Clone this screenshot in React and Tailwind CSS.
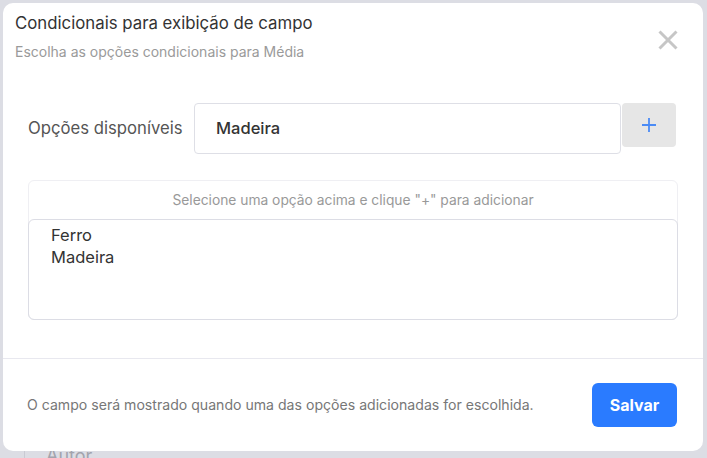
import React from 'react';

export default function App() {
  return (
    <div className="relative w-[707px] h-[458px] overflow-hidden bg-[#dcdde4] font-['Inter',sans-serif]">
      {/* page behind the dialog */}
      <div className="absolute left-[24px] top-[380px] bottom-0 w-px bg-[#c9cad3]" />
      <div className="pl-[46px] pt-[444px] text-[18px] leading-[24px] text-[#a3a4ad]">Autor</div>

      {/* dialog */}
      <div className="absolute left-[3px] top-[3px] w-[700px] h-[448px] rounded-[10px] bg-white flex flex-col">
        <div className="h-[355px] flex flex-col">
          <div className="relative px-[12px] pt-[8px]">
            <h2 className="text-[16.8px] leading-[24px] text-[#333]">Condicionais para exibição de campo</h2>
            <p className="mt-[7px] text-[14px] leading-[20px] text-[#9a9a9a]">Escolha as opções condicionais para Média</p>
            <button className="absolute right-[25px] top-[27px] w-[20px] h-[20px] text-[#c6c6c6]">
              <svg viewBox="0 0 20 20" className="w-[20px] h-[20px]" fill="none" stroke="currentColor" strokeWidth="3">
                <path d="M1.5 1.5 L18.5 18.5 M18.5 1.5 L1.5 18.5" />
              </svg>
            </button>
          </div>

          <div className="mt-[41px] pl-[25px] flex items-start">
            <label className="w-[166px] shrink-0 h-[51px] flex items-center text-[16.7px] text-[#555]">Opções disponíveis</label>
            <div className="w-[427px] h-[51px] rounded-[4px] border border-[#dedfe6] flex items-center pl-[21px] text-[16.5px] font-medium text-[#333]">
              Madeira
            </div>
            <button className="ml-[1px] w-[54px] h-[44px] rounded-[4px] bg-[#e6e6e6] flex items-center justify-center text-[#4b8bf5]">
              <svg viewBox="0 0 14 14" className="w-[14px] h-[14px]" fill="none" stroke="currentColor" strokeWidth="1.8">
                <path d="M7 0 V14 M0 7 H14" />
              </svg>
            </button>
          </div>

          <div className="mt-[26px] mx-[25px] h-[140px] rounded-[6px] border border-[#efeff3] flex flex-col">
            <div className="h-[38px] flex items-center justify-center text-[13.8px] text-[#999]">
              Selecione uma opção acima e clique "+" para adicionar
            </div>
            <div className="flex-1 -mx-px -mb-px rounded-[6px] border border-[#dcdde5] pt-[4px] pl-[22px] text-[16.5px] leading-[22px] text-[#333]">
              <div>Ferro</div>
              <div>Madeira</div>
            </div>
          </div>
        </div>

        <div className="h-px bg-[#e8e8ef]" />

        <div className="flex-1 flex items-center justify-between pl-[24px] pr-[26px]">
          <p className="text-[14.1px] text-[#777]">O campo será mostrado quando uma das opções adicionadas for escolhida.</p>
          <button className="w-[85px] h-[44px] rounded-[6px] bg-[#2a7bff] text-white text-[16px] font-bold">Salvar</button>
        </div>
      </div>
    </div>
  );
}
